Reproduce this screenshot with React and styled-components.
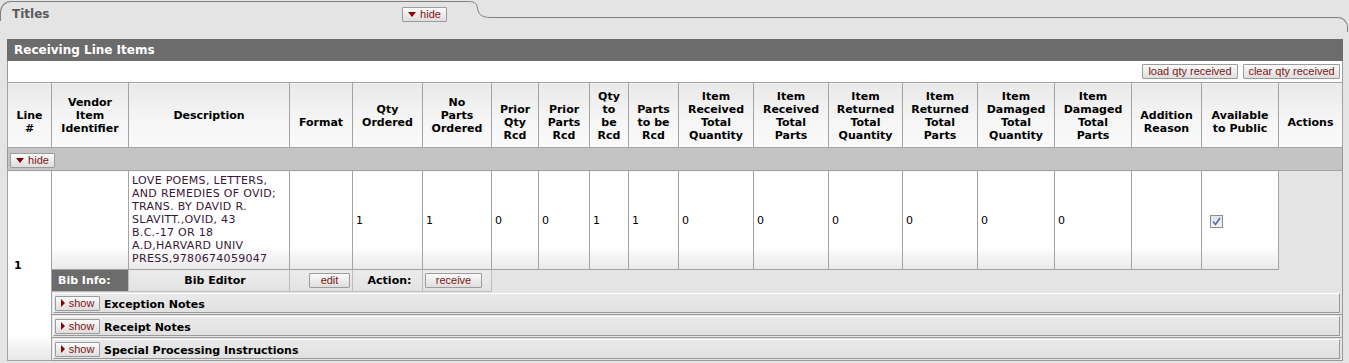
import React from 'react';
import styled, { createGlobalStyle } from 'styled-components';

const GlobalStyle = createGlobalStyle`
  html, body { margin: 0; padding: 0; background: #e4e4e4; }
  body { font-family: "DejaVu Sans", Verdana, sans-serif; font-size: 11px; color: #000; }
`;

const Page = styled.div`
  width: 1349px;
  height: 363px;
  overflow: hidden;
`;

const TabBar = styled.div`
  display: flex;
  align-items: flex-start;
  height: 39px;
`;

const TabLeft = styled.div`
  box-sizing: border-box;
  width: 467px;
  height: 20px;
  margin-top: 1px;
  border-top: 1px solid #808080;
  border-left: 1px solid #808080;
  border-top-left-radius: 11px;
  display: flex;
  align-items: flex-start;
  padding: 0 20px 0 11px;
`;

const TabTitle = styled.div`
  font-weight: bold;
  font-size: 12px;
  line-height: 15px;
  margin-top: 5px;
  color: #5b5b5b;
`;

const TabSpacer = styled.div`
  flex: 1;
`;

const TabCurve = styled.svg`
  display: block;
  flex: none;
`;

const TabRight = styled.div`
  flex: 1;
  height: 14px;
  margin-top: 17px;
  margin-right: 1px;
  border-top: 1px solid #808080;
  border-right: 1px solid #808080;
  border-top-right-radius: 10px;
`;

const Panel = styled.div`
  margin: 0 6px 0 7px;
`;

const SectionHead = styled.div`
  height: 22px;
  line-height: 22px;
  background: #6c6c6c;
  color: #fff;
  font-weight: bold;
  font-size: 12px;
  padding-left: 7px;
`;

const Table = styled.table`
  width: 1336px;
  border-collapse: collapse;
  table-layout: fixed;
  border-right: 1px solid #999;
  border-bottom: 1px solid #999;
  border-left: 1px solid #999;
`;

const ButtonBar = styled.td`
  height: 21px;
  padding: 0 2px 0 0;
  background: #fff;
  text-align: right;
  vertical-align: middle;
  border-bottom: 1px solid #a0a0a0;
`;

const ButtonGroup = styled.div`
  display: flex;
  justify-content: flex-end;
  gap: 5px;
`;

const Th = styled.th`
  height: 65px;
  box-sizing: border-box;
  padding: ${p => (p.$low ? '14px 1px 0' : '1px 1px 0')};
  border: 1px solid #a3a3a3;
  background: linear-gradient(to bottom, #e9e9e9 0%, #f5f5f5 55%, #fafafa 100%);
  font-weight: bold;
  font-size: 11px;
  line-height: 13px;
  text-align: center;
  vertical-align: middle;
  white-space: nowrap;
  color: #000;
`;

const HideRow = styled.td`
  height: 22px;
  padding: 0 0 0 2px;
  background: #c4c4c4;
  border-top: 1px solid #a3a3a3;
  border-bottom: 1px solid #a3a3a3;
  vertical-align: middle;
`;

const LineCell = styled.td`
  padding: 0 0 0 6px;
  background: linear-gradient(to bottom, #fff 0%, #fff 86%, #e6e6e6 100%);
  border: 1px solid #a3a3a3;
  font-weight: bold;
  vertical-align: middle;
`;

const DataCell = styled.td`
  height: 95px;
  padding: ${p => (p.$top ? '3px 0 0 3px' : '0 2px 0 3px')};
  background: linear-gradient(to bottom, #fff 0%, #fff 76%, #e9e9e9 100%);
  border: 1px solid #a3a3a3;
  vertical-align: ${p => (p.$top ? 'top' : 'middle')};
  line-height: 13px;
  font-size: 11px;
  letter-spacing: ${p => (p.$desc ? '0.3px' : '0')};
  color: ${p => (p.$desc ? '#3a1638' : '#000')};
  white-space: nowrap;
  overflow: hidden;
`;

const EmptyCell = styled.td`
  padding: 0;
  border: none;
  background: transparent;
`;

const BibCell = styled.td`
  height: 21px;
  padding: ${p => p.$pad || '0'};
  background: ${p => (p.$dark ? '#6c6c6c' : 'linear-gradient(to bottom, #ececec, #e2e2e2)')};
  color: ${p => (p.$dark ? '#fff' : '#000')};
  font-weight: ${p => (p.$bold ? 'bold' : 'normal')};
  text-align: ${p => p.$align || 'left'};
  border: 1px solid #bdbdbd;
  vertical-align: middle;
  white-space: nowrap;
`;

const SubCell = styled.td`
  padding: 1px 2px 1px 1px;
  border-bottom: 1px solid #999;
`;

const SubBox = styled.div`
  box-sizing: border-box;
  height: 20px;
  display: flex;
  align-items: center;
  gap: 4px;
  padding-left: 1px;
  border: 1px solid;
  border-color: #fff #999 #999 #fff;
  background: linear-gradient(to bottom, #e9e9e9, #e1e1e1);
`;

const SubTitle = styled.span`
  font-weight: bold;
  font-size: 11px;
  margin-top: 3px;
`;

const TinyButton = styled.button`
  box-sizing: border-box;
  display: inline-flex;
  align-items: center;
  justify-content: center;
  gap: 4px;
  width: ${p => p.$w}px;
  height: 15px;
  margin-top: ${p => p.$mt || 0}px;
  padding: 0;
  border: 1px solid #9c9c9c;
  border-radius: 1px;
  background: linear-gradient(to bottom, #fbfbfb, #dedede);
  color: #7d1414;
  font-family: "Liberation Sans", Arial, sans-serif;
  font-size: 11px;
  line-height: 13px;
  cursor: pointer;
`;

const Check = styled.span`
  display: inline-flex;
  align-items: center;
  justify-content: center;
  box-sizing: border-box;
  width: 13px;
  height: 13px;
  margin-left: 5px;
  margin-top: 3px;
  border: 1px solid #8c8c8c;
  background: linear-gradient(to bottom, #dfe3ea, #f2f4f7);
`;

const DownArrow = () => (
  <svg width="8" height="5" viewBox="0 0 8 5"><polygon points="0,0 8,0 4,5" fill="#8b0000" /></svg>
);
const RightArrow = () => (
  <svg width="4" height="8" viewBox="0 0 4 8"><polygon points="0,0 4,4 0,8" fill="#8b0000" /></svg>
);

const headers = [
  { l: ['Line', '#'], low: true },
  { l: ['Vendor', 'Item', 'Identifier'] },
  { l: ['Description'] },
  { l: ['Format'], low: true },
  { l: ['Qty', 'Ordered'] },
  { l: ['No', 'Parts', 'Ordered'] },
  { l: ['Prior', 'Qty', 'Rcd'], low: true },
  { l: ['Prior', 'Parts', 'Rcd'], low: true },
  { l: ['Qty', 'to', 'be', 'Rcd'] },
  { l: ['Parts', 'to be', 'Rcd'], low: true },
  { l: ['Item', 'Received', 'Total', 'Quantity'] },
  { l: ['Item', 'Received', 'Total', 'Parts'] },
  { l: ['Item', 'Returned', 'Total', 'Quantity'] },
  { l: ['Item', 'Returned', 'Total', 'Parts'] },
  { l: ['Item', 'Damaged', 'Total', 'Quantity'] },
  { l: ['Item', 'Damaged', 'Total', 'Parts'] },
  { l: ['Addition', 'Reason'], low: true },
  { l: ['Available', 'to Public'], low: true },
  { l: ['Actions'], low: true },
];

const widths = [44, 77, 161, 63, 70, 69, 47, 51, 39, 50, 75, 75, 74, 75, 77, 77, 70, 77, 64];

const values = ['1', '1', '0', '0', '1', '1', '0', '0', '0', '0', '0', '0'];

const description = [
  'LOVE POEMS, LETTERS,',
  'AND REMEDIES OF OVID;',
  'TRANS. BY DAVID R.',
  'SLAVITT.,OVID, 43',
  'B.C.-17 OR 18',
  'A.D,HARVARD UNIV',
  'PRESS,9780674059047',
];

const subsections = ['Exception Notes', 'Receipt Notes', 'Special Processing Instructions'];

export default function App() {
  return (
    <Page>
      <GlobalStyle />
      <TabBar>
        <TabLeft>
          <TabTitle>Titles</TabTitle>
          <TabSpacer />
          <TinyButton $w={45} $mt={5}><DownArrow />hide</TinyButton>
        </TabLeft>
        <TabCurve width="24" height="20" viewBox="0 0 24 20">
          <path d="M0 1.5 C7 1.5 9.5 2.5 10.5 8 C11.5 14 13.5 17.5 24 17.5" fill="none" stroke="#808080" strokeWidth="1" />
        </TabCurve>
        <TabRight />
      </TabBar>
      <Panel>
        <SectionHead>Receiving Line Items</SectionHead>
        <Table>
          <colgroup>
            {widths.map((w, i) => <col key={i} style={{ width: w }} />)}
          </colgroup>
          <tbody>
            <tr>
              <ButtonBar colSpan={19}>
                <ButtonGroup>
                  <TinyButton $w={96}>load qty received</TinyButton>
                  <TinyButton $w={97}>clear qty received</TinyButton>
                </ButtonGroup>
              </ButtonBar>
            </tr>
            <tr>
              {headers.map((h, i) => (
                <Th key={i} $low={h.low}>
                  {h.l.map((t, j) => (
                    <React.Fragment key={j}>{j > 0 && <br />}{t}</React.Fragment>
                  ))}
                </Th>
              ))}
            </tr>
            <tr>
              <HideRow colSpan={19}>
                <TinyButton $w={45} $mt={2}><DownArrow />hide</TinyButton>
              </HideRow>
            </tr>
            <tr>
              <LineCell rowSpan={5}>1</LineCell>
              <DataCell />
              <DataCell $top $desc>
                {description.map((t, j) => (
                  <React.Fragment key={j}>{j > 0 && <br />}{t}</React.Fragment>
                ))}
              </DataCell>
              <DataCell />
              {values.map((v, i) => <DataCell key={i}>{v}</DataCell>)}
              <DataCell />
              <DataCell>
                <Check>
                  <svg width="9" height="9" viewBox="0 0 9 9">
                    <path d="M1 4.5 L3.5 7.5 L8 1" fill="none" stroke="#5b6aa0" strokeWidth="1.6" />
                  </svg>
                </Check>
              </DataCell>
              <EmptyCell />
            </tr>
            <tr>
              <BibCell $dark $bold $pad="0 0 0 6px">Bib Info:</BibCell>
              <BibCell $bold $align="center" $pad="0 0 0 12px">Bib Editor</BibCell>
              <BibCell $align="right" $pad="0 2px 0 0"><TinyButton $w={41}>edit</TinyButton></BibCell>
              <BibCell $bold $align="center" $pad="0 0 0 4px">Action:</BibCell>
              <BibCell $pad="0 0 0 2px"><TinyButton $w={57}>receive</TinyButton></BibCell>
              <EmptyCell colSpan={13} />
            </tr>
            {subsections.map(s => (
              <tr key={s}>
                <SubCell colSpan={18}>
                  <SubBox>
                    <TinyButton $w={45}><RightArrow />show</TinyButton>
                    <SubTitle>{s}</SubTitle>
                  </SubBox>
                </SubCell>
              </tr>
            ))}
          </tbody>
        </Table>
      </Panel>
    </Page>
  );
}
